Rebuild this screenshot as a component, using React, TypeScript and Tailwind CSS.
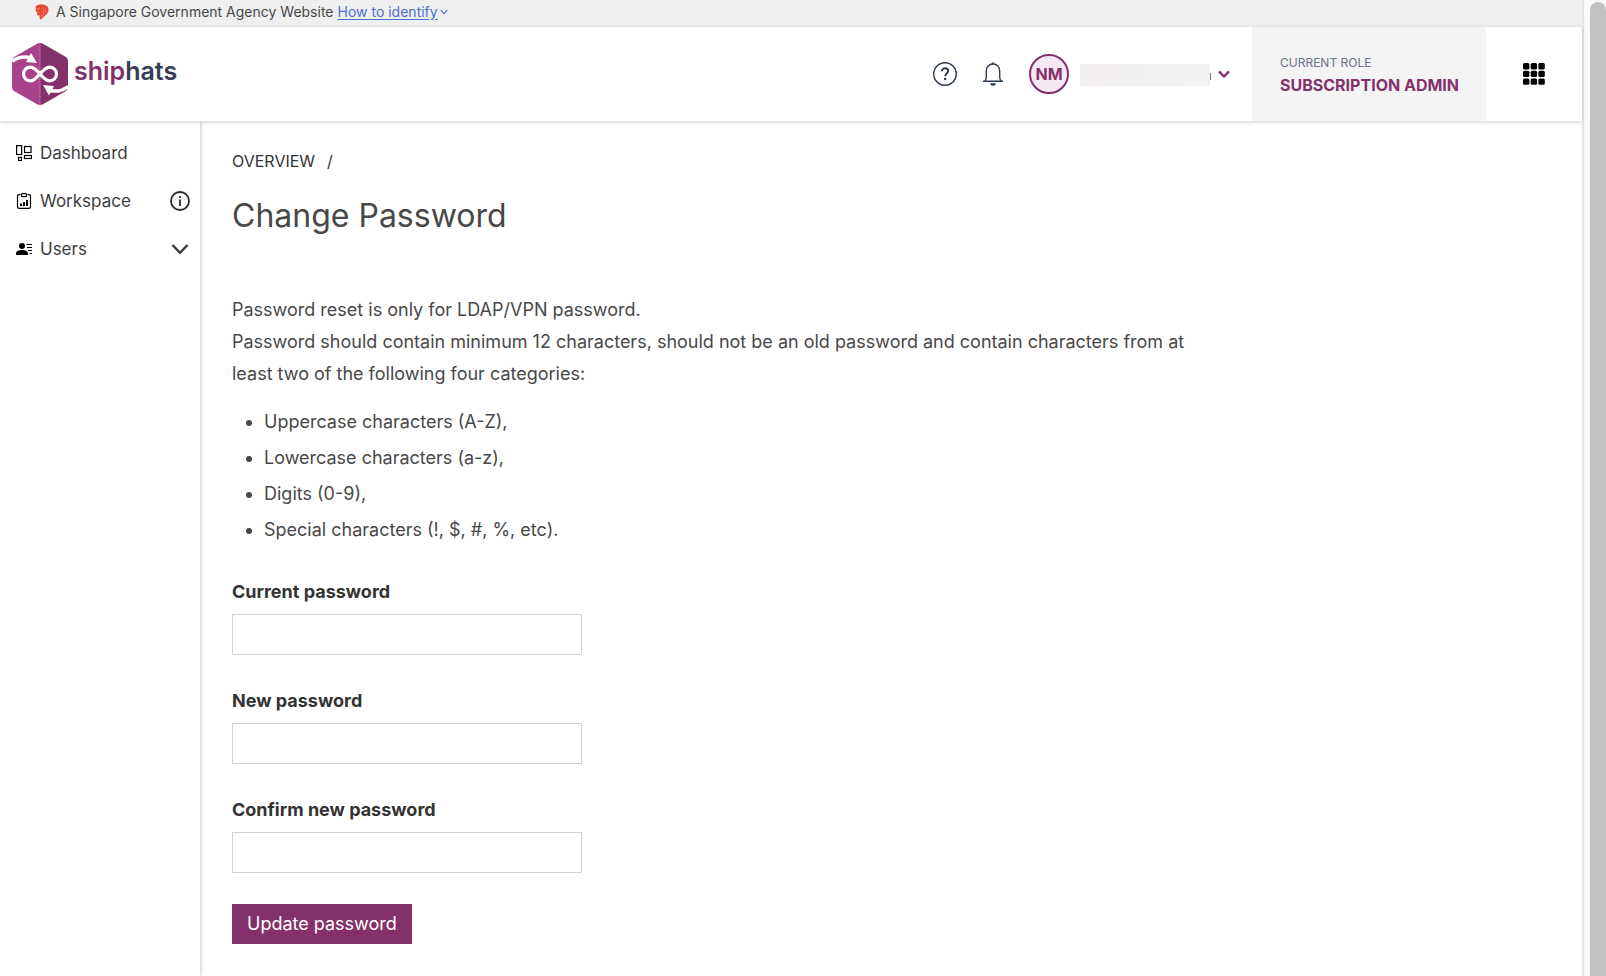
import React from "react";

function LionHead() {
  return (
    <svg className="h-4 w-4" viewBox="0 0 16 16" aria-hidden="true">
      <path
        d="M1.500 2.500C3.500.8 6 .3 8.500.5c3.500.2 6 2.200 6 5.200 0 2.500-1.400 4.200-3 5.600-1.600 1.300-3 2.400-4.500 4.400-.9-.8-1.600-1.700-1.500-2.900l.3-1.500c-1 .3-1.900.2-2.600-.3l-.2-1.400.5-.8-1.200-.5.1-1.300L1.200 6.400l.9-1.700z"
        fill="#e8442f"
      />
      <path
        d="M2.500 5.200l3.500-.9M7.500 3c2 1 2.500 3 1.500 5s-2 2.500-2 4M10.500 3c1.500 1.500 1.500 3.500.5 5.500S8.500 11.500 8 13M3.500 8.500l2-.7"
        stroke="#f3b5aa"
        strokeWidth=".5"
        fill="none"
      />
    </svg>
  );
}

function LogoMark() {
  return (
    <svg className="h-16 w-14" viewBox="0 0 56 64" aria-hidden="true">
      <path d="M28 1c-1 0-2 .3-3 .8L2.500 14.700C1 15.600 0 17 0 19v26c0 2 1 3.400 2.500 4.300L25 62.200c1 .5 2 .8 3 .8z" fill="#a8428a" />
      <path d="M28 1c1 0 2 .3 3 .8l22.500 12.900c1.500.9 2.500 2.300 2.500 4.300v26c0 2-1 3.400-2.500 4.300L31 62.200c-1 .5-2 .8-3 .8z" fill="#84316b" />
      <path d="M28 1v62" stroke="#b767a0" strokeWidth="1" />
      <path
        d="M23.500 36.500c-1.800 1.600-3.300 2.300-5.200 2.300a6.800 6.800 0 0 1 0-13.600c3.200 0 5.400 1.700 9.700 6.800s6.500 6.800 9.700 6.800a6.800 6.800 0 0 0 0-13.600c-3.200 0-5.400 1.700-9.700 6.800"
        fill="none"
        stroke="#fff"
        strokeWidth="3.200"
      />
      <path d="M29 30.500c-1.800 2.200-3.500 4.300-5.500 6" stroke="#fff" strokeWidth="3.200" fill="none" />
      <path d="M0 19.500c5-4 11-5.500 18-4" fill="none" stroke="#fff" strokeWidth="3.500" />
      <path d="M19 11l6 10-11-1z" fill="#fff" />
      <path d="M56 44.500c-5 4-11 5.500-18 4" fill="none" stroke="#fff" strokeWidth="3.500" />
      <path d="M31 43l11 1-5 9.500z" fill="#fff" />
    </svg>
  );
}

function HelpIcon() {
  return (
    <svg className="h-6 w-6" viewBox="0 0 24 24" fill="none" stroke="#2f3b51" aria-hidden="true">
      <circle cx="12" cy="12" r="11.300" strokeWidth="1.400" />
      <path d="M8.900 9.300c0-1.900 1.300-3 3.200-3 1.800 0 3.100 1.100 3.100 2.700 0 2.400-3 2.500-3 5.200" strokeWidth="1.900" />
      <circle cx="12.100" cy="17" r="1.300" fill="#2f3b51" stroke="none" />
    </svg>
  );
}

function BellIcon() {
  return (
    <svg className="h-6 w-6" viewBox="0 0 24 24" fill="none" stroke="#2f3b51" aria-hidden="true">
      <path d="M2 19.300h20M4 19c1-1.300 1.300-2.500 1.300-4.500V9.300C5.300 5 8 2 12 2s6.700 3 6.700 7.300v5.200c0 2 .3 3.200 1.300 4.500" strokeWidth="1.400" />
      <path d="M10.500 1.800a1.500 1.500 0 0 1 3 0zM9 21.200h6c-.5 1.700-1.500 2.600-3 2.600s-2.500-.9-3-2.600z" fill="#2f3b51" stroke="none" />
    </svg>
  );
}

function AppsIcon() {
  const cells = [0, 7.700, 15.400];
  return (
    <svg className="h-[22px] w-[22px]" viewBox="0 0 22 22" aria-hidden="true">
      {cells.map((y) => cells.map((x) => <rect key={`${x}-${y}`} x={x} y={y} width="6.400" height="6.400" rx="1.500" />))}
    </svg>
  );
}

function Chevron({ className, width }: { className: string; width: number }) {
  return (
    <svg className={className} viewBox="0 0 18 12" fill="none" stroke="currentColor" strokeWidth={width} aria-hidden="true">
      <path d="M1.500 2L9 9.800 16.500 2" />
    </svg>
  );
}

function DashboardIcon() {
  return (
    <svg className="h-4 w-4 shrink-0" viewBox="0 0 16 16" fill="none" stroke="#000" strokeWidth="1.200" aria-hidden="true">
      <rect x=".6" y=".6" width="5" height="8.900" />
      <rect x="8.500" y="1.500" width="6.500" height="6" />
      <rect x="8.500" y="10.500" width="7" height="3" />
      <rect x="2.500" y="12.400" width="3" height="3" />
    </svg>
  );
}

function WorkspaceIcon() {
  return (
    <svg className="h-4 w-4 shrink-0" viewBox="0 0 16 16" fill="none" stroke="#000" aria-hidden="true">
      <path d="M4.500 1.600H3.200A1.700 1.700 0 0 0 1.500 3.300v10.400a1.700 1.700 0 0 0 1.700 1.700h9.600a1.700 1.700 0 0 0 1.700-1.700V3.300a1.700 1.700 0 0 0-1.700-1.700H11.500" strokeWidth="1.200" />
      <rect x="5.500" y=".6" width="5" height="3" rx=".8" strokeWidth="1.200" />
      <path d="M5 10.500V13M8 9v4M11 7v6" strokeWidth="2" />
    </svg>
  );
}

function UsersIcon() {
  return (
    <svg className="h-4 w-4 shrink-0" viewBox="0 0 16 16" fill="#000" aria-hidden="true">
      <circle cx="6" cy="5" r="3" />
      <path d="M0 14v-1.500C0 10 3 9 6 9s6 1 6 3.500V14zM10.500 3H16v1h-5.500zM11 6h5v1h-5zM12 9h4v1h-4zM13.500 12H16v1h-2.500z" />
    </svg>
  );
}

function InfoIcon() {
  return (
    <svg className="h-5 w-5" viewBox="0 0 20 20" fill="none" stroke="#2b2b2b" strokeWidth="1.800" aria-hidden="true">
      <circle cx="10" cy="10" r="9" />
      <path d="M10 8.500V15M10 5v2" />
    </svg>
  );
}

function GovBanner() {
  return (
    <div className="flex h-[27px] items-center bg-[#efefef] pb-1 pl-[34px] text-sm text-[#484848]">
      <LionHead />
      <span className="ml-1.5">A Singapore Government Agency Website</span>
      <a href="#identify" className="ml-1 flex items-center gap-0.5 text-[#4a6fd0]">
        <span className="underline underline-offset-2">How to identify</span>
        <Chevron className="h-1.5 w-2" width={2.5} />
      </a>
    </div>
  );
}

function Header() {
  return (
    <header className="z-20 flex h-[94px] shrink-0 items-stretch bg-white shadow-[0_1px_4px_rgba(0,0,0,0.2)]">
      <a href="#home" className="flex items-center gap-1.5 pl-3">
        <LogoMark />
        <span className="pb-1 text-[25px] font-semibold text-[#333f55]">
          <span className="text-[#84316b]">ship</span>hats
        </span>
      </a>
      <div className="ml-auto flex items-center pr-[22px]">
        <button type="button" aria-label="Help" className="mr-6"><HelpIcon /></button>
        <button type="button" aria-label="Notifications" className="mr-6"><BellIcon /></button>
        <button type="button" aria-label="Account menu" className="flex items-center">
          <span className="flex h-10 w-10 items-center justify-center rounded-full border-2 border-[#84316b] bg-[#f6e9f3] font-bold text-[#84316b]">NM</span>
          <span className="mt-0.5 ml-[11px] h-[22px] w-[130px] bg-linear-to-r from-[#f1edf0] to-[#f3f3f3]" />
          <span className="mt-1 mr-[7px] h-[7px] w-px bg-[#777]" />
          <span className="text-[#84316b]"><Chevron className="h-2 w-3" width={3.500} /></span>
        </button>
      </div>
      <div className="flex w-[234px] flex-col justify-center bg-[#f4f4f4] pt-0.5 pl-7">
        <span className="text-xs leading-5 text-[#6a7285]">CURRENT ROLE</span>
        <span className="text-base leading-6 font-bold text-[#84316b]">SUBSCRIPTION ADMIN</span>
      </div>
      <button type="button" aria-label="Applications" className="flex w-24 items-center justify-center"><AppsIcon /></button>
    </header>
  );
}

function Sidebar() {
  const row = "flex h-12 w-full items-center gap-2 pr-2.5 pl-4 text-left text-[17px] text-[#3d3d3d]";
  return (
    <nav aria-label="Main" className="z-10 w-[200px] shrink-0 bg-white pt-2 shadow-[1px_0_4px_rgba(0,0,0,0.2)]">
      <a href="#dashboard" className={row}><DashboardIcon /><span className="pt-0.5">Dashboard</span></a>
      <a href="#workspace" className={row}><WorkspaceIcon /><span className="pt-0.5">Workspace</span><span className="ml-auto"><InfoIcon /></span></a>
      <button type="button" className={row}>
        <UsersIcon /><span className="pt-0.5">Users</span>
        <span className="ml-auto flex w-5 justify-center"><Chevron className="h-3 w-[18px]" width={2.500} /></span>
      </button>
    </nav>
  );
}

function PasswordField({ id, label }: { id: string; label: string }) {
  return (
    <div className="flex flex-col">
      <label htmlFor={id} className="mb-2 text-lg leading-7 font-bold text-[#333]">{label}</label>
      <input id={id} type="password" className="h-[41px] w-[350px] border border-[#d2d2d2] bg-white px-3 outline-none" />
    </div>
  );
}

function Content() {
  return (
    <main className="flex-1 bg-white pt-6 pl-8 text-lg text-[#484848]">
      <nav aria-label="Breadcrumb" className="flex gap-3 text-base leading-8 text-[#333]">
        <a href="#overview">OVERVIEW</a>
        <span>/</span>
      </nav>
      <h1 className="mt-[15px] text-[32px] leading-12">Change Password</h1>
      <div className="mt-[54px] max-w-[960px] leading-8">
        <p>Password reset is only for LDAP/VPN password.</p>
        <p>
          Password should contain minimum 12 characters, should not be an old password and contain characters from at
          least two of the following four categories:
        </p>
      </div>
      <ul className="mt-3.5 list-disc pl-8 leading-9">
        <li>Uppercase characters (A-Z),</li>
        <li>Lowercase characters (a-z),</li>
        <li>Digits (0-9),</li>
        <li>Special characters (!, $, #, %, etc).</li>
      </ul>
      <form className="mt-[30px] flex flex-col items-start" onSubmit={(e) => e.preventDefault()}>
        <div className="flex flex-col gap-8">
          <PasswordField id="current" label="Current password" />
          <PasswordField id="new" label="New password" />
          <PasswordField id="confirm" label="Confirm new password" />
        </div>
        <button type="submit" className="mt-[31px] h-10 bg-[#84316b] px-[15px] text-white">Update password</button>
      </form>
    </main>
  );
}

export default function App() {
  return (
    <div className="flex h-screen overflow-hidden bg-[#fafafa] font-['Inter',sans-serif]">
      <div className="flex min-w-0 flex-1 flex-col border-r-2 border-[#e6e6e6]">
        <GovBanner />
        <Header />
        <div className="flex min-h-0 flex-1">
          <Sidebar />
          <Content />
        </div>
      </div>
      <div className="flex w-[22px] justify-end pt-0.5" aria-hidden="true">
        <div className="w-4 rounded-t-full bg-[#c1c1c1]" />
      </div>
    </div>
  );
}
